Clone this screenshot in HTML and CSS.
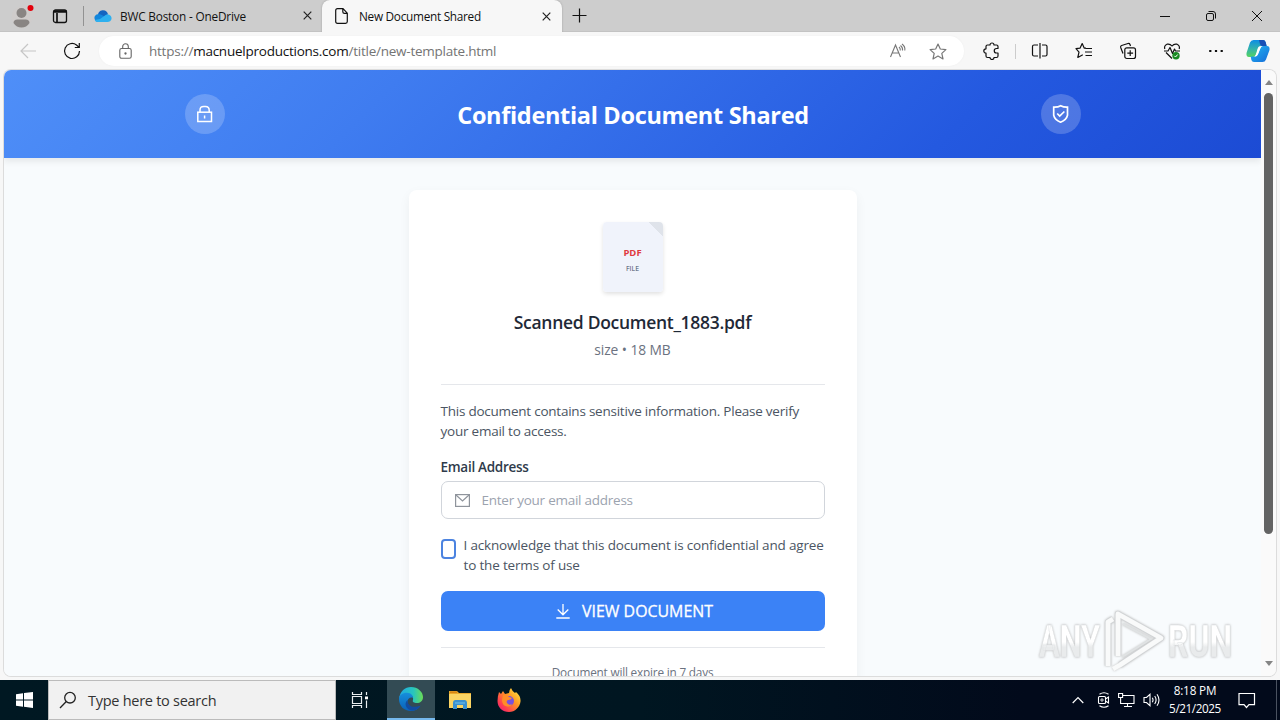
FILE: index.html
```html
<!DOCTYPE html>
<html lang="en">
<head>
<meta charset="utf-8">
<title>New Document Shared</title>
<link rel="stylesheet" href="styles.css">
</head>
<body>
<div class="screen">
  <header class="tabstrip">
    <div class="profile">
      <svg width="22" height="26" viewBox="0 0 22 26"><circle cx="11" cy="14" r="10.5" fill="#cfcccb"/><circle cx="10.500" cy="10" r="5" fill="#898583"/><path d="M2.500 20q0-3.500 4-3.500h8q4 0 4 3.500-3 4.500-8 4.500T2.500 20z" fill="#898583"/><circle cx="19.500" cy="5" r="3" fill="#e3000b"/></svg>
    </div>
    <svg class="workspaces" width="16" height="16" viewBox="0 0 16 16" fill="none" stroke="#111" stroke-width="1.300"><rect x="1.500" y="2" width="13" height="12.500" rx="2"/><path d="M1.500 4h13M1.500 3h13M5 5v9.500" stroke-width="1.700"/></svg>
    <div class="divider"></div>
    <div class="tab tab-drive">
      <svg width="18" height="12" viewBox="0 0 18 12"><path d="M4 8C3 3 6 0 9 .3c3 0 4.500 2 5 4L8 9z" fill="#1464c0"/><path d="M1 10C-.5 7 1 4.500 4 4.200c3-.6 5 2 8 3.800l-5 4H4q-2 0-3-2z" fill="#1286dc"/><path d="M6 9l6-4.300c4-1.200 6 2 5.500 4.300-.5 2-2 3-4 3H4c-2 0-3-1-3.200-2z" fill="#2eb0ef"/></svg>
      <span class="tab-title t-drive">BWC Boston - OneDrive</span>
      <svg class="close" width="9" height="9" viewBox="0 0 9 9"><path d="M.7.700l7.600 7.600M8.300.700L.7 8.300" stroke="#222" stroke-width="1.200"/></svg>
    </div>
    <div class="tab tab-active">
      <svg width="13" height="16" viewBox="0 0 13 16" fill="none" stroke="#111" stroke-width="1.200"><path d="M2.500.7H8l4.300 4.500v8.300q0 1.800-1.800 1.800h-8q-1.800 0-1.800-1.800v-11Q.7.700 2.500.7zM7.800.7v3q0 1.700 1.700 1.700h2.800"/></svg>
      <span class="tab-title t-new">New Document Shared</span>
      <svg class="close" width="9" height="9" viewBox="0 0 9 9"><path d="M.7.700l7.600 7.600M8.300.700L.7 8.300" stroke="#222" stroke-width="1.200"/></svg>
    </div>
    <svg class="newtab" width="15" height="15" viewBox="0 0 15 15"><path d="M7.500.5v14M.5 7.500h14" stroke="#111" stroke-width="1.200"/></svg>
    <div class="winctl">
      <svg width="12" height="12" viewBox="0 0 12 12" fill="none" stroke="#111"><path d="M1 6.500h10"/></svg>
      <svg width="12" height="12" viewBox="0 0 12 12" fill="none" stroke="#111"><rect x="1.500" y="3.500" width="7" height="7" rx="1.500"/><path d="M3.500 1.500H8q2.500 0 2.500 2.500v4.500"/></svg>
      <svg width="12" height="12" viewBox="0 0 12 12" fill="none" stroke="#111"><path d="M1 1l10 10M11 1L1 11"/></svg>
    </div>
  </header>

  <nav class="toolbar">
    <svg class="back" width="18" height="16" viewBox="0 0 18 16" fill="none" stroke="#c6c6c6" stroke-width="1.200"><path d="M16 8H1M8 1L1 8l7 7"/></svg>
    <svg class="reload" width="18" height="18" viewBox="0 0 18 18" fill="none" stroke="#111" stroke-width="1.200"><path d="M16.500 9A7.500 7.500 0 1 1 13.500 3l2.500 2.200M16.300 1v4.500h-4.500"/></svg>
    <div class="address">
      <svg width="13" height="16" viewBox="0 0 13 16" fill="none" stroke="#666" stroke-width="1.100"><rect x=".8" y="5.500" width="11.400" height="9.800" rx="1.800"/><path d="M3.700 5.500V3.600a2.800 2.800 0 0 1 5.600 0v1.900"/><circle cx="6.500" cy="10.500" r=".6" fill="#666"/></svg>
      <span class="url">https://<b>macnuelproductions.com</b>/title/new-template.html</span>
      <svg class="read" width="18" height="16" viewBox="0 0 18 16" fill="none" stroke="#777" stroke-width="1.100"><path d="M1.500 14L6.500 2l5 12M3.200 10h6.600M10 4q1.500 1.300 1.300 3.500M11.500 2.500q2.500 2 2 5M13 1q3.500 2.500 2.800 6.500"/></svg>
      <svg class="star" width="18" height="17" viewBox="0 0 18 17" fill="none" stroke="#777" stroke-width="1.200" stroke-linejoin="round"><path d="M9 1l2.300 5 5.600.6-4.100 3.800 1.200 5.500L9 13.100l-5 2.800 1.200-5.500L1.100 6.600 6.700 6z"/></svg>
    </div>
    <div class="tools">
      <svg class="puzzle" width="18" height="18" viewBox="0 0 18 18" fill="none" stroke="#111" stroke-width="1.200" stroke-linejoin="round"><path d="M5.500 3H8a2 2 0 0 1 4 0h2.500Q16 3 16 4.500v2h-1.500a2 2 0 0 0 0 4.500H16v3q0 1.500-1.500 1.500H12a2 2 0 0 1-4 0H5.500Q4 15.500 4 14v-2.800a2.200 2.200 0 0 1 0-4.400V4.500Q4 3 5.500 3z"/></svg>
      <i class="sep"></i>
      <svg class="tool" width="18" height="18" viewBox="0 0 18 18" fill="none" stroke="#111" stroke-width="1.200"><path d="M7 3H3Q1.500 3 1.500 4.500v8Q1.500 14 3 14h4M11 3h3.500Q16 3 16 4.500v8q0 1.500-1.500 1.500H11M9 1v15.500"/></svg>
      <svg class="tool" width="18" height="18" viewBox="0 0 18 18" fill="none" stroke="#111" stroke-width="1.200" stroke-linejoin="round"><path d="M11 6.200H9.300L7.200 1.500 5 6.200l-4 .5 3 3.500-1.200 5.300 5-2.800M10.500 6.500H17M10 10h7M10.500 13.500H17"/></svg>
      <svg class="tool" width="18" height="18" viewBox="0 0 18 18" fill="none" stroke="#111" stroke-width="1.200" stroke-linejoin="round"><rect x="5.800" y="5.800" width="10.700" height="10.700" rx="2"/><path d="M11.200 8.300v5.800M8.300 11.200h5.800M4 11.500L1.700 5.500Q1.200 4 2.600 3.500L9 1.500q1.500-.3 2 1l.5 1.500"/></svg>
      <svg class="tool" width="18" height="18" viewBox="0 0 18 18" fill="none" stroke="#111" stroke-width="1.200" stroke-linejoin="round"><path d="M1.800 7Q.8 3.500 4 2.200 7 1.500 9 4q2-2.500 5-1.800Q17.200 3.500 16.200 7M1 9h4l2-3.500 2.500 6L11.500 7l1 2H17M3 10.500l6 6"/><circle cx="13" cy="13.800" r="3.700" fill="#198a23" stroke="none"/><path d="M11.300 13.800l1.200 1.200 2.200-2.500" stroke="#fff" stroke-width="1"/></svg>
      <svg class="tool" width="18" height="18" viewBox="0 0 18 18"><path d="M2.200 8h2.200v2H2.200zM7.900 8h2.200v2H7.900zM13.600 8h2.200v2h-2.200z" fill="#111"/></svg>
      <svg class="copilot" width="24" height="24" viewBox="0 0 24 24"><defs><linearGradient id="ca" x1="0" y1="0" x2="0" y2="1"><stop offset="0" stop-color="#0d8de5"/><stop offset=".55" stop-color="#35b5a8"/><stop offset="1" stop-color="#55d45f"/></linearGradient><linearGradient id="cb" x1="0" y1="0" x2="1" y2="1"><stop offset="0" stop-color="#1fb9f2"/><stop offset="1" stop-color="#176bd9"/></linearGradient></defs><path d="M7.500 1H17q2 0 2.600 2l1 4H15q-2 0-3 3l-2 6q-.8 2-3 2H3Q0 18 .5 14L4 3.500Q5 1 7.500 1z" fill="url(#ca)"/><path d="M17 7h4q3 0 2.500 4L20 20.500Q19 23 16.500 23H8q-2 0-2.600-2L4.700 17.500H9q2 0 3-3l2-5Q15 7 17 7z" fill="url(#cb)"/><path d="M13 7.500h3q-1 0-1.800 2.500l-2 5q-.9 2.500-3.200 2.500H8.500q1.200-1 2-4l1-3.500q.5-2 1.500-2.500z" fill="#fff"/><path d="M13 1h4q2 0 2.600 2l1 4H16q-1.500 0-2-2z" fill="#174fb6"/></svg>
    </div>
  </nav>

  <div class="viewport">
    <main class="page">
      <div class="banner">
        <div class="badge"><svg width="20" height="20" viewBox="0 0 20 20" fill="none" stroke="#fff" stroke-width="1.500"><rect x="2.800" y="8.200" width="13.700" height="9.300"/><path d="M5 8V6.200Q5 2.400 8.700 2.400h1.800q3.700 0 3.700 3.800V8M9.600 11.500v3"/></svg></div>
        <h1>Confidential Document Shared</h1>
        <div class="badge"><svg width="20" height="20" viewBox="0 0 20 20" fill="none" stroke="#fff" stroke-width="1.700"><path d="M2.700 3.200q4 .2 7-1.500 3 1.700 6.800 1.500v8q-1 4.500-6.900 7-5.900-2.500-6.900-7zM6.200 9.500l2.500 2.600 4.700-4.600"/></svg></div>
      </div>
      <section class="card">
        <div class="file">
          <span class="file-pdf">PDF</span><span class="file-word">FILE</span>
        </div>
        <h2>Scanned Document_1883.pdf</h2>
        <p class="meta">size • 18 MB</p>
        <div class="rule"></div>
        <p class="notice body-text"><span>This document contains sensitive information. Please verify</span><br><span>your email to access.</span></p>
        <div class="label">Email Address</div>
        <div class="field">
          <svg width="15" height="13" viewBox="0 0 15 13" fill="none" stroke="#8f949c" stroke-width="1.200"><rect x=".6" y=".6" width="13.800" height="11.800"/><path d="M1 1l6.500 6L14 1"/></svg>
          <span class="placeholder">Enter your email address</span>
        </div>
        <div class="ack"><i class="box"></i><p class="body-text ack-text"><span>I acknowledge that this document is confidential and agree</span><br><span>to the terms of use</span></p></div>
        <div class="button"><svg width="14" height="15" viewBox="0 0 14 15" fill="none" stroke="#fff" stroke-width="1.300"><path d="M7 0v10.500M1.700 5.500L7 10.800l5.300-5.300M.3 14h13.400"/></svg><span>VIEW DOCUMENT</span></div>
        <div class="rule rule-low"></div>
        <p class="expire">Document will expire in 7 days</p>
      </section>
    </main>
    <aside class="scroll"><i class="up"></i><i class="thumb"></i><i class="down"></i></aside>
  </div>

  <div class="watermark">
    <svg width="204" height="64" viewBox="0 0 204 64">
      <defs><linearGradient id="wg" x1="0" y1="0" x2="0" y2="1"><stop offset="0.5" stop-color="#fff"/><stop offset=".6" stop-color="#e9ebec"/></linearGradient></defs>
      <g class="wm-text"><text x="5" y="49" textLength="61" lengthAdjust="spacingAndGlyphs">ANY</text><text x="134" y="49" textLength="64" lengthAdjust="spacingAndGlyphs">RUN</text></g>
      <g fill="none" stroke="#d2d5d7" stroke-width="6.400" stroke-linejoin="round"><path d="M74 58V14l5-3M84 48V6l43 24-41 27"/></g>
      <g fill="none" stroke="#f9fafa" stroke-width="4.800" stroke-linejoin="round"><path d="M74 58V14l5-3M84 48V6l43 24-41 27-7 4"/></g>
      <path d="M89 16l28 15-29 18" fill="none" stroke="#dfe2e3" stroke-width="2"/>
    </svg>
  </div>

  <footer class="taskbar">
    <div class="start"><svg width="17" height="16" viewBox="0 0 17 16" fill="#fff"><path d="M0 2.300L7 1.300v6.200H0zM8 1.100L17 0v7.500H8zM0 8.500h7v6.200l-7-1zM8 8.500h9V16l-9-1.200z"/></svg></div>
    <div class="search"><svg width="18" height="18" viewBox="0 0 18 18" fill="none" stroke="#222" stroke-width="1.300"><circle cx="11" cy="6.700" r="5.300"/><path d="M7.300 10.500L1 17"/></svg><span>Type here to search</span></div>
    <div class="app app-view"><svg width="18" height="16" viewBox="0 0 18 16" fill="none" stroke="#e9eef0" stroke-width="1.200"><path d="M1.500 0v2.500h9V0M1.500 16v-2.500h9V16M1.500 4.500h9v7h-9zM15.500 0v3M15.500 8.500V16"/><path d="M14 4.500h3v2.800h-3z" fill="#fff" stroke="none"/></svg></div>
    <div class="app app-on"><svg width="24" height="24" viewBox="0 0 24 24"><defs><linearGradient id="ea"><stop offset="0" stop-color="#1fa8e5"/><stop offset=".6" stop-color="#28c5bd"/><stop offset="1" stop-color="#6bdc55"/></linearGradient><linearGradient id="eb" x1="0" y1="0" x2="0" y2="1"><stop offset="0" stop-color="#168fdc"/><stop offset="1" stop-color="#0a60b8"/></linearGradient></defs><path d="M0 12C1 4 6 0 12 0c7 0 12 5 12 10 0 4-3 6-6 6-3 0-5-1-4-3 1-4-3-6-6-6-4 0-7 2-8 5z" fill="url(#ea)"/><path d="M0 12c0-4 4-6.500 8-6.300 4 .3 6 2.500 6 5-3-1-5.500 1-5.500 4 0 5 6 8 13 4C19 22 16 24 12 24 5 24 0 19 0 12z" fill="url(#eb)"/><path d="M8.500 13c0 6 5 8.500 13 5.700-3 4.500-7 5.500-10 4.500-5-1.500-6.500-7-3-10.200z" fill="#124ba0"/></svg></div>
    <div class="app"><svg width="22" height="20" viewBox="0 0 22 20"><path d="M0 1h8l2 2h12v15H0z" fill="#e9a92c"/><path d="M0 4h22v14H0z" fill="#fbd463"/><path d="M1 2.200h7" stroke="#d78311" stroke-width="1.500"/><path d="M4 19v-6q0-3 2.500-3h9Q18 10 18 13v6h-4v-4H8v4z" fill="#3b91d1"/><path d="M6 13h10" stroke="#73c2ec"/></svg></div>
    <div class="app"><svg width="24" height="24" viewBox="0 0 24 24"><defs><linearGradient id="fa" x1="1" y1="0" x2="0" y2="1"><stop offset="0" stop-color="#fff44f"/><stop offset=".4" stop-color="#ff9b22"/><stop offset=".75" stop-color="#ff3e50"/><stop offset="1" stop-color="#e31587"/></linearGradient></defs><path d="M2 4l2 2 2-3 2 3 4-1q0-3 2-5 1 3 4 5l1-1q5 4 4.500 9.500C23 19 18 24 12 24 5.500 24 .5 19.500.5 13 .5 10 1 7 2 4z" fill="url(#fa)"/><circle cx="12" cy="13" r="5" fill="#7952dd"/><path d="M6 7q4-1 6 2l3 1q-1 2-4 2-2 1-1 3 2 3 5 1-1 3-5 2.500Q5 17.500 5 12z" fill="#ff8d27"/></svg></div>
    <div class="tray">
      <svg width="12" height="8" viewBox="0 0 12 8" fill="none" stroke="#fff" stroke-width="1.200"><path d="M.7 7L6 1.700 11.300 7"/></svg>
      <svg width="14" height="18" viewBox="0 0 14 18" fill="none" stroke="#fff" stroke-width="1.100"><rect x="2.500" y="5.500" width="7" height="7" rx="1"/><path d="M9.500 8l3-2v6l-3-2M3.500 3.200q4.500-3 9 0M3.500 14.800q4.500 3 9 0"/><path d="M5 8h2v2H5z" stroke-width=".8"/></svg>
      <svg width="17" height="16" viewBox="0 0 17 16" fill="none" stroke="#fff" stroke-width="1.100"><path d="M5 3.500h11v8H4.500M9.500 11.500v3M6 14.500h8M.6 1.500h4v4h-4zM2.600 5.500v6h2"/></svg>
      <svg width="18" height="14" viewBox="0 0 18 14" fill="none" stroke="#fff" stroke-width="1.100"><path d="M1 4.500h2.500L7 1.300v11.400L3.500 9.500H1zM9.300 4.800q1.500 2.200 0 4.400M11.700 3q2.800 4 0 8M14 1.200q4 5.800 0 11.600"/></svg>
      <div class="clock"><span>8:18 PM</span><span class="date">5/21/2025</span></div>
      <svg class="note" width="18" height="17" viewBox="0 0 18 17" fill="none" stroke="#fff" stroke-width="1.200"><path d="M1 1.500h15.500v11.200H11L8.500 15.500 6 12.700H1z"/></svg>
      <i class="peek"></i>
    </div>
  </footer>
</div>
</body>
</html>
```
FILE: styles.css
```css
* { box-sizing: border-box; }
body { margin: 0; font-family: "Open Sans", "Noto Sans", sans-serif; overflow: hidden; }
h1, h2, p { margin: 0; }
svg { display: block; flex: none; }
span { white-space: nowrap; }
.screen { width: 1280px; height: 720px; display: flex; flex-direction: column; background: #f7f7f7; position: relative; }

.tabstrip { height: 32px; background: #cdcdcd; display: flex; align-items: center; flex: none; border-bottom: 1px solid #c3c3c3; }
.profile { margin-left: 11px; width: 24px; }
.profile svg { overflow: visible; }
.workspaces { margin-left: 17px; }
.divider { width: 1px; height: 20px; margin-left: 15px; background: #929292; }
.tab { display: flex; align-items: center; height: 32px; font-size: 11.8px; color: #111; }
.tab-drive { width: 238px; padding-left: 10px; }
.tab-title { margin-left: 8px; }
.tab-active { width: 240px; margin-bottom: -1px; padding-left: 13px; background: #f7f7f7; border-radius: 8px 8px 0 0; box-shadow: 0 0 2px #999; clip-path: inset(0 -3px 0 -3px); }
.tab-active .tab-title { margin-left: 11px; }
.close { margin-left: auto; margin-right: 10px; }
.tab-active .close { margin-right: 11px; }
.newtab { margin-left: 10px; }
.winctl { display: flex; gap: 34px; margin-left: auto; margin-right: 17px; }
.t-drive { letter-spacing: -.18px; }
.t-new { letter-spacing: -.28px; }

.toolbar { height: 38px; display: flex; align-items: center; flex: none; }
.back { margin-left: 20px; }
.reload { margin-left: 25px; }
.address { margin-left: 18px; width: 865px; height: 30px; background: #fff; border-radius: 15px; display: flex; align-items: center; padding-left: 20px; box-shadow: 0 0 2px #eee; }
.url { margin-left: 17px; font-size: 13.5px; letter-spacing: -.24px; color: #747474; }
.url b { font-weight: 400; color: #111; }
.read { margin-left: auto; }
.star { margin: 0 17px 0 22px; }
.tools { display: flex; align-items: center; }
.puzzle { margin-left: 18px; }
.sep { width: 1px; height: 15px; background: #ccc; margin: 0 15px 0 15px; }
.tool { margin-right: 26px; }
.copilot { margin-left: -5px; }

.viewport { height: 606px; margin: 0 4px 4px 4px; display: flex; border-radius: 7px; overflow: hidden; background: #fafafa; box-shadow: 0 0 0 1px #dcdcdc; width: 1272px; flex: none; }
.page { width: 1257px; background: #f8fbfd; display: flex; flex-direction: column; align-items: center; overflow: hidden; height: 606px; }
.banner { align-self: stretch; height: 88px; flex: none; display: flex; align-items: center; justify-content: space-between; padding: 0 180px 0 181px; background: linear-gradient(135deg, #4f8ff8 0%, #3f7cf0 30%, #2459e0 75%, #1c4bd4 100%); box-shadow: 0 4px 6px rgba(0,0,0,.07); }
.banner h1 { color: #fff; font-size: 23.5px; letter-spacing: -.32px; line-height: 32px; font-weight: 700; white-space: nowrap; padding-top: 2px; }
.badge { width: 40px; height: 40px; border-radius: 50%; background: rgba(255,255,255,.2); display: flex; align-items: center; justify-content: center; }
.card { width: 448px; flex: none; margin-top: 32px; padding: 32px; background: #fff; border-radius: 8px; box-shadow: 0 4px 12px rgba(0,0,0,.05); display: flex; flex-direction: column; height: 560px; }
.file { width: 60px; height: 70px; align-self: center; border-radius: 4px; background: linear-gradient(225deg, #dfe3ea 0 10px, #f0f3fb 10px); box-shadow: 0 2px 4px rgba(0,0,0,.12); display: flex; flex-direction: column; align-items: center; padding-top: 22px; }
.file-pdf { font-size: 9.5px; font-weight: 700; color: #e03a3f; line-height: 17px; }
.file-word { font-size: 7px; color: #3f5068; line-height: 15px; }
.card h2 { font-size: 17.5px; letter-spacing: -.29px; font-weight: 600; color: #1f2937; line-height: 28px; margin-top: 16px; text-align: center; white-space: nowrap; }
.meta { font-size: 13.8px; letter-spacing: -.08px; line-height: 20px; color: #6b7280; margin-top: 4px; text-align: center; }
.rule { height: 1px; background: #e5e7eb; margin-top: 24px; flex: none; }
.body-text { font-size: 13.5px; letter-spacing: -.23px; line-height: 20px; color: #4b5563; }
.notice { margin-top: 16px; }
.label { font-size: 13.5px; letter-spacing: -.28px; line-height: 20px; font-weight: 600; color: #2f3b4b; margin-top: 16px; }
.label, .ack, .button, .field { flex: none; }
.field { height: 38px; margin-top: 4px; border: 1px solid #d1d5db; border-radius: 7px; display: flex; align-items: center; padding-left: 13px; }
.placeholder { margin-left: 12px; font-size: 13.5px; letter-spacing: -.25px; color: #9ca3af; }
.ack { display: flex; margin-top: 16px; }
.ack-text { letter-spacing: -.17px; }
.box { width: 15px; height: 20px; border: 2px solid #4c83e0; border-radius: 4px; margin: 4px 8px 0 0; flex: none; }
.button { height: 40px; margin-top: 16px; border-radius: 7px; background: #3b82f6; color: #fff; display: flex; align-items: center; justify-content: center; font-size: 15.9px; -webkit-text-stroke: .3px #fff; gap: 12px; padding-left: 4px; }
.rule-low { margin-top: 16px; }
.expire { font-size: 11.8px; letter-spacing: -.2px; line-height: 16px; margin-top: 16px; text-align: center; color: #6b7280; }
.scroll { width: 15px; display: flex; flex-direction: column; align-items: center; background: #fafafa; padding-top: 10px; }
.up { border: 4.500px solid transparent; border-top: 0; border-bottom: 5px solid #858585; }
.thumb { width: 9px; height: 441px; margin-top: 8px; background: #636363; border-radius: 5px; }
.down { border: 4.500px solid transparent; border-bottom: 0; border-top: 5px solid #858585; margin-top: 127px; }

.watermark { position: absolute; left: 1034px; top: 608px; filter: drop-shadow(0 0 1px #bbb); }
.wm-text { font: 700 44px "Roboto", sans-serif; fill: url(#wg); stroke: #dcdfe1; stroke-width: .4; }

.taskbar { height: 40px; background: linear-gradient(90deg, #001822 0%, #001621 50%, #020a1b 80%, #020a1b 100%); display: flex; flex: none; }
.start { width: 48px; display: flex; align-items: center; justify-content: center; }
.search { width: 288px; background: #f1f1f1; border: 1px solid #bbb; display: flex; align-items: center; padding-left: 10px; font-size: 14.5px; letter-spacing: -.27px; color: #333; }
.search span { margin-left: 11px; }
.app { width: 49px; display: flex; align-items: center; justify-content: center; }
.app-view { width: 51px; padding-right: 3px; }
.app-on { width: 48px; background: #334b54; border-bottom: 2px solid #76b9ed; }
.tray { margin-left: auto; display: flex; align-items: center; color: #fff; gap: 8px; }
.clock { width: 52px; display: flex; flex-direction: column; align-items: center; font-size: 11.7px; letter-spacing: -.15px; line-height: 18px; margin: -2px 0 0 0; }
.date { letter-spacing: -.4px; }
.note { margin: 0 12px 0 9px; }
.peek { width: 4px; height: 40px; border-left: 1px solid #4a5260; }
.tray svg:nth-child(1) { margin-right: 4px; }
```
